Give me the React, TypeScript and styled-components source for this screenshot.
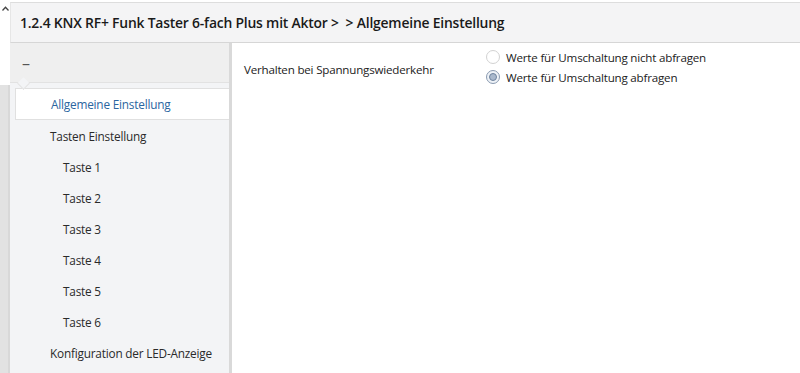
import React from 'react';
import styled, { createGlobalStyle } from 'styled-components';

const GlobalStyle = createGlobalStyle`
  html, body {
    margin: 0;
    padding: 0;
    background: #ffffff;
  }
  body {
    font-family: 'Open Sans', 'Noto Sans', sans-serif;
    color: #222222;
  }
`;

interface NavItem {
  label: string
  level: number
}

const navItems: NavItem[] = [
  { label: 'Tasten Einstellung', level: 1 },
  { label: 'Taste 1', level: 2 },
  { label: 'Taste 2', level: 2 },
  { label: 'Taste 3', level: 2 },
  { label: 'Taste 4', level: 2 },
  { label: 'Taste 5', level: 2 },
  { label: 'Taste 6', level: 2 },
  { label: 'Konfiguration der LED-Anzeige', level: 1 },
];

const Page = styled.div`
  display: flex;
  width: 800px;
  height: 373px;
  overflow: hidden;
`;

const LeftStrip = styled.div`
  width: 10px;
  display: flex;
  flex-direction: column;
  flex-shrink: 0;
`;

const StripTop = styled.div`
  height: 85px;
  background: #ffffff;
  display: flex;
  justify-content: center;
  padding-top: 6px;
  box-sizing: border-box;
`;

const StripBottom = styled.div`
  flex: 1;
  background: #e2e2e2;
  border-right: 2px solid #d8d8d8;
`;

const Main = styled.div`
  flex: 1;
  display: flex;
  flex-direction: column;
  min-width: 0;
`;

const TopBar = styled.div`
  height: 39px;
  margin-top: 2px;
  border-top: 1px solid #dddddd;
  border-bottom: 1px solid #d6d6d6;
  border-left: 1px solid #e6e6e6;
  background: #f4f4f5;
  display: flex;
  align-items: center;
  padding-left: 9px;
  font-size: 13.9px;
  font-weight: 600;
  color: #1a1a1a;
  letter-spacing: -0.2px;
  white-space: nowrap;
`;

const Body = styled.div`
  flex: 1;
  display: flex;
`;

const Sidebar = styled.div`
  width: 219px;
  flex-shrink: 0;
  background: #f3f4f6;
  border-right: 3px solid #d9d9d9;
  display: flex;
  flex-direction: column;
`;

const SideHeader = styled.div`
  position: relative;
  height: 39px;
  background: #efefef;
  border-bottom: 1px solid #e2e2e2;
  display: flex;
  align-items: center;
  padding-left: 12px;
  color: #555555;
  font-size: 16px;
  &::after {
    content: '';
    position: absolute;
    left: 9px;
    bottom: -6px;
    width: 8px;
    height: 8px;
    background: #f3f4f6;
    border-right: 1px solid #e2e2e2;
    border-bottom: 1px solid #e2e2e2;
    transform: rotate(45deg);
  }
`;

const NavList = styled.div`
  display: flex;
  flex-direction: column;
  padding-top: 5px;
`;

const NavRow = styled.div<{ $level: number; $active?: boolean }>`
  height: ${p => (p.$active ? 32 : 31)}px;
  display: flex;
  align-items: center;
  box-sizing: border-box;
  font-size: 11.8px;
  letter-spacing: -0.2px;
  white-space: nowrap;
  margin-left: ${p => (p.$active ? '5px' : '0')};
  margin-bottom: ${p => (p.$active ? '1px' : '0')};
  padding-left: ${p => (p.$active ? 35 : p.$level === 1 ? 40 : 53)}px;
  padding-bottom: 1px;
  background: ${p => (p.$active ? '#ffffff' : 'transparent')};
  border: ${p => (p.$active ? '1px solid #e0e0e0' : 'none')};
  border-right: none;
  color: ${p => (p.$active ? '#2a65a0' : '#2a2a2a')};
`;

const Content = styled.div`
  flex: 1;
  display: flex;
  align-items: flex-start;
  padding: 6px 0 0 12px;
  font-size: 11.6px;
  letter-spacing: -0.2px;
`;

const ParamLabel = styled.div`
  width: 242px;
  padding-top: 13px;
  white-space: nowrap;
`;

const Options = styled.div`
  display: flex;
  flex-direction: column;
  gap: 4px;
`;

const Option = styled.label`
  display: flex;
  align-items: center;
  gap: 6px;
  height: 16px;
  white-space: nowrap;
`;

const Radio = styled.span<{ $checked?: boolean }>`
  width: 14px;
  height: 14px;
  border-radius: 50%;
  box-sizing: border-box;
  border: 1px solid ${p => (p.$checked ? '#8a9ab0' : '#d2d2d2')};
  background: ${p => (p.$checked ? '#eef2f7' : '#ffffff')};
  display: flex;
  align-items: center;
  justify-content: center;
  &::after {
    content: '';
    display: ${p => (p.$checked ? 'block' : 'none')};
    width: 8px;
    height: 8px;
    border-radius: 50%;
    background: #a9b8cc;
    border: 1px solid #6f839e;
    box-sizing: border-box;
  }
`;

const App = () => {
  return (
    <Page>
      <GlobalStyle />
      <LeftStrip>
        <StripTop>
          <svg width="7" height="5" viewBox="0 0 7 5">
            <path d="M0.5 4.5 L3.5 1.2 L6.5 4.5" fill="none" stroke="#444" strokeWidth="1.3" />
          </svg>
        </StripTop>
        <StripBottom />
      </LeftStrip>
      <Main>
        <TopBar>1.2.4 KNX RF+ Funk Taster 6-fach Plus mit Aktor &gt; &nbsp;&gt; Allgemeine Einstellung</TopBar>
        <Body>
          <Sidebar>
            <SideHeader>–</SideHeader>
            <NavList>
              <NavRow $level={1} $active>Allgemeine Einstellung</NavRow>
              {navItems.map(item => (
                <NavRow key={item.label} $level={item.level}>{item.label}</NavRow>
              ))}
            </NavList>
          </Sidebar>
          <Content>
            <ParamLabel>Verhalten bei Spannungswiederkehr</ParamLabel>
            <Options>
              <Option><Radio />Werte für Umschaltung nicht abfragen</Option>
              <Option><Radio $checked />Werte für Umschaltung abfragen</Option>
            </Options>
          </Content>
        </Body>
      </Main>
    </Page>
  );
};

export default App;
